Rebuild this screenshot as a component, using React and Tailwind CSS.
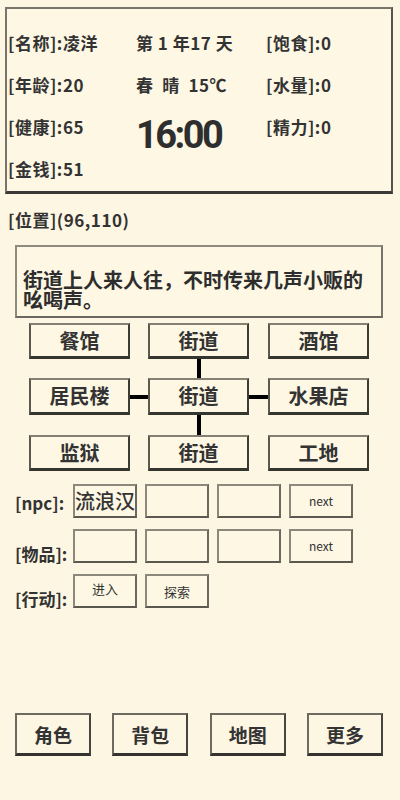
import React from "react";

const F = { fontFamily: '"Noto Sans CJK SC", "Noto Sans", sans-serif' };

function MapBtn({ children }) {
  return (
    <div className="flex items-center justify-center border-t-2 border-l-2 border-b-[3px] border-r-2 border-t-[#858074] border-l-[#5a5850] border-b-[#353530] border-r-[#3c3c36] bg-[#fdf7e4] text-[20px] font-bold text-[#333] leading-none">
      {children}
    </div>
  );
}

function SmallBox({ children, cls = "" }) {
  return (
    <div className={"flex items-center justify-center w-[64px] h-[34px] border-2 border-t-[#8d887c] border-l-[#8d887c] border-b-[#5b5850] border-r-[#6b685f] bg-[#fdf7e4] text-[#333] leading-none " + cls}>
      {children}
    </div>
  );
}

function HLine() {
  return (
    <div className="flex items-center">
      <div className="h-[4px] w-full bg-black" />
    </div>
  );
}
function VLine() {
  return (
    <div className="flex justify-center">
      <div className="w-[4px] h-full bg-black" />
    </div>
  );
}

function BottomBtn({ children }) {
  return (
    <div className="flex items-center justify-center w-[76px] h-[43px] border-2 border-b-[3px] border-t-[#6d6a62] border-l-[#6d6a62] border-b-[#34332f] border-r-[#45443f] text-[19px] font-bold text-[#333] leading-none">
      {children}
    </div>
  );
}

export default function App() {
  return (
    <div className="w-[400px] h-[800px] bg-[#fdf6e2] text-[#333] overflow-hidden" style={F}>
      {/* top status panel */}
      <div className="ml-[5px] mt-[7px] w-[388px] h-[187px] border-2 border-b-[3px] border-t-[#77746b] border-l-[#77746b] border-r-[#55534d] border-b-[#3a3935] bg-[#fdf7e4] pt-[12px] flex text-[17px] tracking-[0.5px] font-bold leading-none">
        <div className="w-[129px] pl-[1px] flex flex-col">
          <div className="h-[42px] flex items-center">[名称]:凌洋</div>
          <div className="h-[42px] flex items-center">[年龄]:20</div>
          <div className="h-[42px] flex items-center">[健康]:65</div>
          <div className="h-[42px] flex items-center">[金钱]:51</div>
        </div>
        <div className="w-[130px] flex flex-col">
          <div className="h-[42px] flex items-center">第 1 年17 天</div>
          <div className="h-[42px] flex items-center">春&nbsp;&nbsp;晴&nbsp;&nbsp;15℃</div>
          <div
            className="mt-[8px] h-[44px] flex items-center text-[38px] font-bold tracking-[-2.5px] text-[#2e2e2e]"
            style={{ fontFamily: 'Roboto, "Noto Sans", sans-serif' }}
          >
            16:00
          </div>
        </div>
        <div className="flex flex-col">
          <div className="h-[42px] flex items-center">[饱食]:0</div>
          <div className="h-[42px] flex items-center">[水量]:0</div>
          <div className="h-[42px] flex items-center">[精力]:0</div>
        </div>
      </div>

      {/* location */}
      <div className="ml-[8px] mt-[14px] h-[22px] flex items-center text-[17px] tracking-[0.5px] font-bold leading-none">
        [位置](96,110)
      </div>

      {/* description */}
      <div className="ml-[15px] mt-[15px] w-[368px] h-[73px] border-2 border-t-[#8f8a7e] border-l-[#8f8a7e] border-b-[#6b685f] border-r-[#77746b] bg-[#fdf7e4] pt-[23px] pl-[6px] text-[20px] leading-[20px] font-bold text-[#2e2e2e]">
        街道上人来人往，不时传来几声小贩的吆喝声。
      </div>

      {/* map */}
      <div className="ml-[29px] mt-[5px] grid grid-cols-[101px_18px_101px_19px_101px] grid-rows-[36px_19px_37px_20px_36px]">
        <MapBtn>餐馆</MapBtn>
        <div />
        <MapBtn>街道</MapBtn>
        <div />
        <MapBtn>酒馆</MapBtn>

        <div />
        <div />
        <VLine />
        <div />
        <div />

        <MapBtn>居民楼</MapBtn>
        <HLine />
        <MapBtn>街道</MapBtn>
        <HLine />
        <MapBtn>水果店</MapBtn>

        <div />
        <div />
        <VLine />
        <div />
        <div />

        <MapBtn>监狱</MapBtn>
        <div />
        <MapBtn>街道</MapBtn>
        <div />
        <MapBtn>工地</MapBtn>
      </div>

      {/* npc / items / actions */}
      <div className="ml-[15px] mt-[13px] flex flex-col gap-[11px]">
        <div className="flex items-end">
          <div className="w-[58px] pb-[7px] text-[17px] font-bold leading-none">[npc]:</div>
          <div className="flex gap-[8px]">
            <SmallBox cls="text-[20px] font-medium">流浪汉</SmallBox>
            <SmallBox />
            <SmallBox />
            <SmallBox cls="text-[12px]">next</SmallBox>
          </div>
        </div>
        <div className="flex items-end">
          <div className="w-[58px] pb-[1px] text-[17px] font-bold leading-none">[物品]:</div>
          <div className="flex gap-[8px]">
            <SmallBox />
            <SmallBox />
            <SmallBox />
            <SmallBox cls="text-[12px]">next</SmallBox>
          </div>
        </div>
        <div className="flex items-end">
          <div className="w-[58px] pb-[1px] text-[17px] font-bold leading-none">[行动]:</div>
          <div className="flex gap-[8px]">
            <SmallBox cls="text-[13px] items-start pt-[6px]">进入</SmallBox>
            <SmallBox cls="text-[13px]">探索</SmallBox>
          </div>
        </div>
      </div>

      {/* bottom buttons */}
      <div className="ml-[15px] mt-[105px] w-[368px] flex justify-between">
        <BottomBtn>角色</BottomBtn>
        <BottomBtn>背包</BottomBtn>
        <BottomBtn>地图</BottomBtn>
        <BottomBtn>更多</BottomBtn>
      </div>
    </div>
  );
}
